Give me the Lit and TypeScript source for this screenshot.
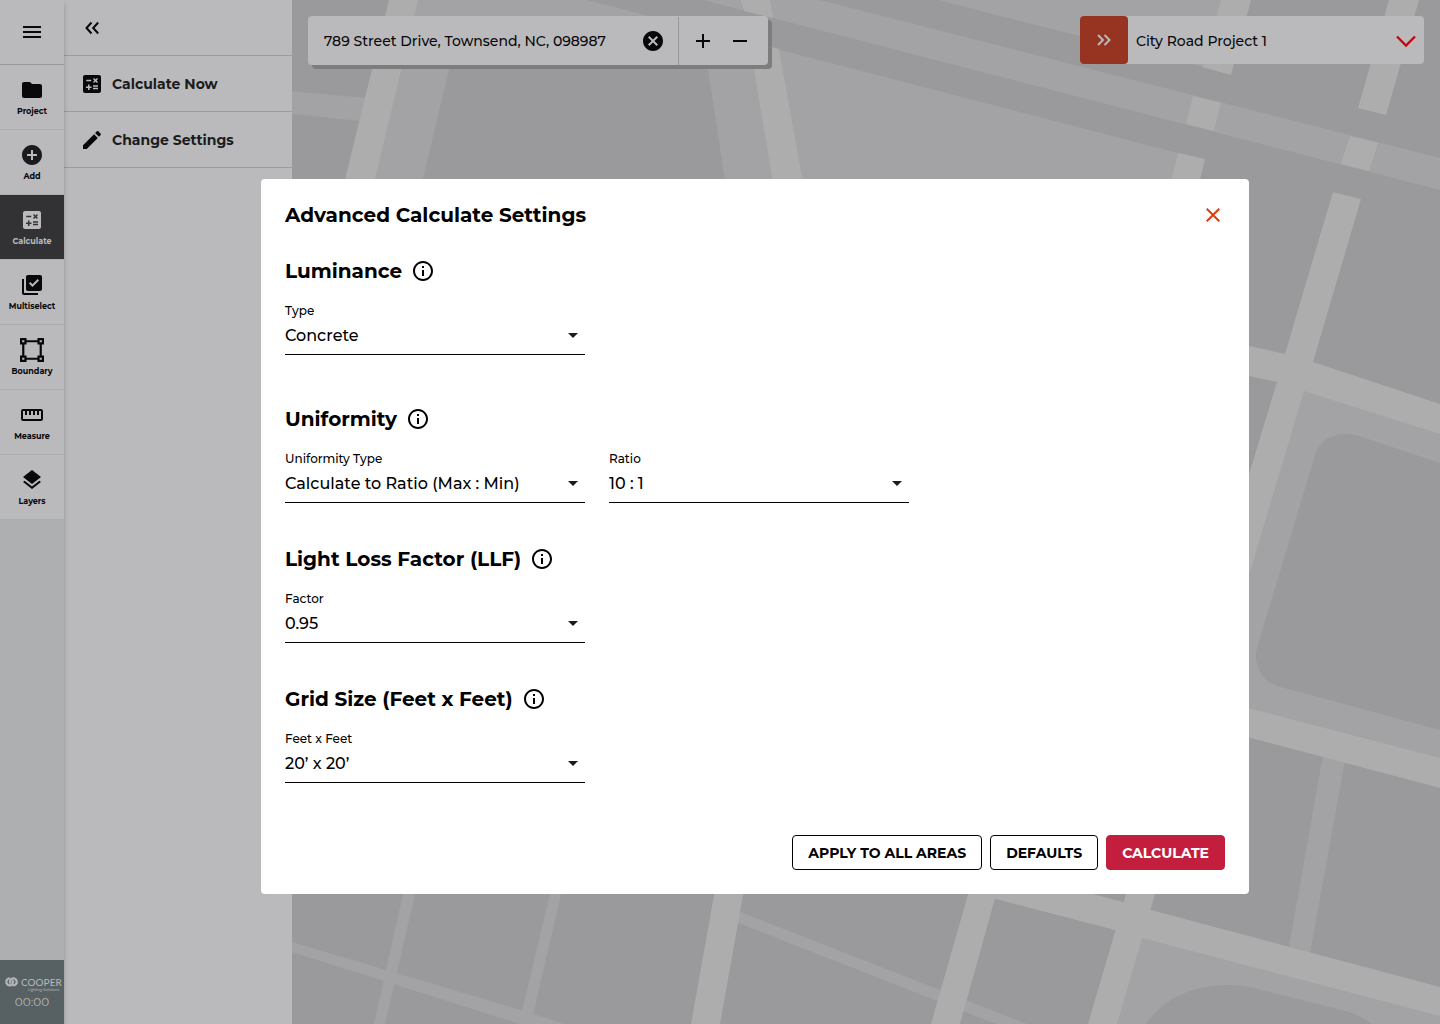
import { LitElement, html, svg, css, TemplateResult } from "lit";
import { customElement, property, state } from "lit/decorators.js";
import { classMap } from "lit/directives/class-map.js";

const CALC_PATH =
  "M19 3H5c-1.1 0-2 .9-2 2v14c0 1.1.9 2 2 2h14c1.1 0 2-.9 2-2V5c0-1.1-.9-2-2-2zm-5.97 4.06L14.09 6l1.41 1.41L16.91 6l1.06 1.06-1.41 1.41 1.41 1.41-1.06 1.06-1.41-1.4-1.41 1.41-1.06-1.06 1.41-1.41-1.41-1.42zM6.25 7.72h5v1.5h-5v-1.5zM11.5 16h-2v2H8v-2H6v-1.5h2v-2h1.5v2h2V16zm6.5 1.25h-5v-1.5h5v1.5zm0-2.5h-5v-1.5h5v1.5z";

const ICONS: Record<string, TemplateResult> = {
  menu: svg`<path d="M3 18h18v-2H3v2zm0-5h18v-2H3v2zm0-7v2h18V6H3z"/>`,
  folder: svg`<path d="M10 4H4c-1.1 0-1.99.9-1.99 2L2 18c0 1.1.9 2 2 2h16c1.1 0 2-.9 2-2V8c0-1.1-.9-2-2-2h-8l-2-2z"/>`,
  add: svg`<path fill="#1b1b1e" d="M12 2C6.48 2 2 6.48 2 12s4.480 10 10 10 10-4.480 10-10S17.520 2 12 2zm5 11h-4v4h-2v-4H7v-2h4V7h2v4h4v2z"/>`,
  calculate: svg`<path d=${CALC_PATH} />`,
  multiselect: svg`<path d="M20 2H8c-1.1 0-2 .9-2 2v12c0 1.1.9 2 2 2h12c1.1 0 2-.9 2-2V4c0-1.1-.9-2-2-2zm-7.530 12L9 10.500l1.400-1.410 2.070 2.080L17.600 6 19 7.410 12.470 14zM4 6H2v14c0 1.100.9 2 2 2h14v-2H4V6z"/>`,
  boundary: svg`<path transform="scale(1.091) translate(-1 -1)" d="M23 7V1h-6v2H7V1H1v6h2v10H1v6h6v-2h10v2h6v-6h-2V7h2zM3 3h2v2H3V3zm2 18H3v-2h2v2zm12-2H7v-2H5V7h2V5h10v2h2v10h-2v2zm4 2h-2v-2h2v2zM19 5V3h2v2h-2z"/>`,
  measure: svg`<path d="M21 6H3c-1.100 0-2 .9-2 2v8c0 1.100.9 2 2 2h18c1.100 0 2-.9 2-2V8c0-1.100-.9-2-2-2zm0 10H3V8h2v4h2V8h2v4h2V8h2v4h2V8h2v4h2V8h2v8z"/>`,
  layers: svg`<path d="M11.990 18.540l-7.370-5.730L3 14.070l9 7 9-7-1.630-1.270-7.380 5.740zM12 16l7.360-5.730L21 9l-9-7-9 7 1.630 1.270L12 16z"/>`,
  collapse: svg`<path d="M11.500 6.500L6.500 12l5 5.500M18.200 6.500L13.200 12l5 5.500" fill="none" stroke="currentColor" stroke-width="2"/>`,
  expand: svg`<path d="M6 7l5 5-5 5M12.500 7l5 5-5 5" fill="none" stroke="currentColor" stroke-width="2"/>`,
  edit: svg`<path d="M3 17.250V21h3.750L17.810 9.940l-3.750-3.750L3 17.250zM20.710 7.040c.39-.39.39-1.020 0-1.410l-2.340-2.340c-.39-.39-1.020-.39-1.410 0l-1.830 1.830 3.750 3.750 1.830-1.830z"/>`,
  clear: svg`<path d="M12 2C6.470 2 2 6.470 2 12s4.470 10 10 10 10-4.470 10-10S17.530 2 12 2zm5 13.590L15.590 17 12 13.410 8.410 17 7 15.590 10.590 12 7 8.410 8.410 7 12 10.590 15.590 7 17 8.410 13.410 12 17 15.590z"/>`,
  plus: svg`<path d="M19 13h-6v6h-2v-6H5v-2h6V5h2v6h6v2z"/>`,
  minus: svg`<path d="M19 13H5v-2h14v2z"/>`,
  close: svg`<path d="M19 6.410L17.590 5 12 10.590 6.410 5 5 6.410 10.590 12 5 17.590 6.410 19 12 13.410 17.590 19 19 17.590 13.410 12z"/>`,
  info: svg`<path d="M11 7h2v2h-2V7zm0 4h2v6h-2v-6zm1-9C6.480 2 2 6.480 2 12s4.480 10 10 10 10-4.480 10-10S17.520 2 12 2zm0 18c-4.410 0-8-3.590-8-8s3.590-8 8-8 8 3.590 8 8-3.590 8-8 8z"/>`,
  caret: svg`<path d="M7 10l5 5 5-5z"/>`,
  chevron: svg`<path d="M3 7.500l9 9 9-9" fill="none" stroke="currentColor" stroke-width="2.300"/>`,
};

const icon = (name: string) =>
  html`<svg class="icon" viewBox="0 0 24 24" aria-hidden="true">${ICONS[name]}</svg>`;

const iconStyles = css`
  .icon {
    display: block;
    flex: none;
    width: 24px;
    height: 24px;
    fill: currentColor;
  }
  button,
  input,
  select {
    margin: 0;
    padding: 0;
    border: 0;
    border-radius: 0;
    background: none;
    color: inherit;
    font: inherit;
    outline-offset: 2px;
  }
  select {
    appearance: none;
    cursor: pointer;
  }
  button {
    cursor: pointer;
  }
`;

/* Street map drawn behind the workspace. */
@customElement("street-map")
class StreetMap extends LitElement {
  static styles = css`
    :host {
      display: block;
      background: #9a9a9c;
    }
    svg {
      display: block;
      width: 100%;
      height: 100%;
    }
    .base {
      fill: #9a9a9c;
    }
    .block {
      fill: #a3a3a5;
    }
    .road {
      fill: #adadad;
    }
  `;

  render() {
    return html`<svg viewBox="292 0 1148 1024" preserveAspectRatio="xMinYMin slice" aria-hidden="true">
      <g class="block">
        <path d="M292 91L366 98L360 121L292 114Z" />
        <path d="M418 0H587L1178 153L1205 159L1195 200H340Z" />
        <path d="M703 0H820L1440 158V190Z" />
        <path d="M938 0H1225L1204 67L1040 26Z" />
        <path d="M1300 388L1440 432V760L1245 709V575Z" />
        <path d="M1323 755L1345 760L1310 953L1289 947Z" />
        <path d="M292 942L534 1014L564 1024H520L292 952Z" />
        <path d="M404 890H416L385 1024H374Z" />
        <path d="M551 890H562L533 1015L522 1011Z" />
        <path d="M738 911L1027 1024H996L736 922Z" />
        <path d="M1140 935L1440 1014V1024H1115Z" />
      </g>
      <g class="base">
        <path d="M464 50H705L728 200H418L450 65Z" />
        <path d="M1440 463L1356 435C1337 431 1320 438 1315 455L1257 648C1253 664 1261 681 1277 686L1440 730Z" />
        <path d="M1146 1024C1166 995 1198 985 1229 985Q1242 985 1254 988L1346 1011Q1360 1015 1372 1024Z" />
      </g>
      <g class="road">
        <path d="M389 0H418L370 200H340Z" />
        <path d="M741 0H770L773 18L744 11Z" />
        <path d="M749 41L779 49L806 200H776Z" />
        <path d="M1221 0H1251L1231 75L1202 67Z" />
        <path d="M1389 0H1419L1386 115L1358 108Z" />
        <path d="M1193 96L1221 103L1214 131L1186 124Z" />
        <path d="M1350 136L1378 143L1369 171L1341 164Z" />
        <path d="M1178 153L1205 159L1195 200H1166Z" />
        <path d="M1333 192L1361 199L1313 362L1304 391L1240 605V504L1277 382L1285 354Z" />
        <path d="M1240 344L1285 354L1313 362L1440 404V434L1304 391L1277 382L1240 374Z" />
        <path d="M1240 706L1440 758V788L1240 735Z" />
        <path d="M970 884H1055L1123 902L1151 910L1440 987V1016L1142 938L1115 930L996 899L940 884Z" />
        <path d="M971 884H999L960 1024H931Z" />
        <path d="M1129 884H1158L1117 1024H1088Z" />
        <path d="M716 884H745L720 1024H691Z" />
      </g>
    </svg>`;
  }
}

/* Labelled drop-down with an underline. */
@customElement("select-field")
class SelectField extends LitElement {
  @property() label = "";
  @property({ type: Array }) options: string[] = [];

  static styles = [
    iconStyles,
    css`
      :host {
        display: block;
        width: 300px;
      }
      label {
        display: block;
        font-size: 12px;
        line-height: 16px;
        font-weight: 500;
      }
      .control {
        display: grid;
        align-items: center;
        border-bottom: 1px solid #000000;
      }
      .control > * {
        grid-area: 1 / 1;
      }
      select {
        width: 100%;
        height: 35px;
        padding-bottom: 2px;
        font-size: 16px;
        font-weight: 500;
      }
      .caret {
        justify-self: end;
        padding-bottom: 4px;
        color: #1b1b1f;
        pointer-events: none;
      }
    `,
  ];

  render() {
    return html`
      <label for="field">${this.label}</label>
      <div class="control">
        <select id="field">
          ${this.options.map((o) => html`<option>${o}</option>`)}
        </select>
        <span class="caret">${icon("caret")}</span>
      </div>
    `;
  }
}

@customElement("nav-rail")
class NavRail extends LitElement {
  @state() private active = "Calculate";

  private items: [string, string][] = [
    ["Project", "folder"],
    ["Add", "add"],
    ["Calculate", "calculate"],
    ["Multiselect", "multiselect"],
    ["Boundary", "boundary"],
    ["Measure", "measure"],
    ["Layers", "layers"],
  ];

  static styles = [
    iconStyles,
    css`
      :host {
        display: flex;
        flex-direction: column;
        background: #adafb0;
        box-shadow: 0 4px 4px rgba(0, 0, 0, 0.25);
      }
      .menu {
        display: grid;
        place-items: center;
        height: 65px;
        border-bottom: 1px solid #98989a;
        background: #bababc;
      }
      nav {
        display: flex;
        flex-direction: column;
      }
      .item {
        display: flex;
        flex-direction: column;
        align-items: center;
        gap: 4px;
        height: 65px;
        padding-top: 13px;
        border-bottom: 1px solid #aeaeb0;
        background: #bababc;
        font-size: 8px;
        line-height: 10px;
        font-weight: 700;
      }
      .item.active {
        background: #323234;
        color: #bababc;
      }
      .brand {
        display: flex;
        flex-direction: column;
        align-items: center;
        gap: 2px;
        height: 64px;
        margin-top: auto;
        padding-top: 16px;
        box-sizing: border-box;
        background: #576063;
        color: #b2b4b5;
        font-size: 12px;
        line-height: 16px;
      }
      .logo {
        display: block;
        width: 56px;
        height: 16px;
        overflow: visible;
      }
      .name,
      .tag {
        font-family: Lato, sans-serif;
      }
      .name {
        font-size: 10px;
        font-weight: 500;
      }
      .tag {
        font-size: 4px;
      }
    `,
  ];

  render() {
    return html`
      <button class="menu" aria-label="Menu">${icon("menu")}</button>
      <nav>
        ${this.items.map(
          ([label, name]) => html`<button
            class=${classMap({ item: true, active: label === this.active })}
            @click=${() => (this.active = label)}
          >
            ${icon(name)}<span>${label}</span>
          </button>`
        )}
      </nav>
      <div class="brand">
        <svg class="logo" viewBox="0 0 56 16">
          <g fill="none" stroke="#b2b4b5" stroke-width="2.300">
            <path d="M5.800 2.400A3.500 3.500 0 1 0 8.400 8.200L9.200 4.200" />
            <path d="M8.800 9.300A3.500 3.500 0 1 0 6.600 3.600L5.800 7.400" />
          </g>
          <g fill="#b2b4b5">
            <text class="name" x="17" y="10">COOPER</text>
            <text class="tag" x="24" y="15">Lighting Solutions</text>
          </g>
        </svg>
        <span>00:00</span>
      </div>
    `;
  }
}

@customElement("settings-dialog")
class SettingsDialog extends LitElement {
  private sections = [
    { title: "Luminance", fields: [{ label: "Type", options: ["Concrete", "Asphalt"] }] },
    {
      title: "Uniformity",
      fields: [
        { label: "Uniformity Type", options: ["Calculate to Ratio (Max : Min)", "Calculate to Ratio (Avg : Min)"] },
        { label: "Ratio", options: ["10 : 1", "6 : 1", "4 : 1"] },
      ],
    },
    { title: "Light Loss Factor (LLF)", fields: [{ label: "Factor", options: ["0.95", "0.90", "0.85"] }] },
    { title: "Grid Size (Feet x Feet)", fields: [{ label: "Feet x Feet", options: ["20’ x 20’", "10’ x 10’"] }] },
  ];

  static styles = [
    iconStyles,
    css`
      :host {
        display: block;
        box-sizing: border-box;
        width: 100%;
        max-width: 988px;
        padding: 24px;
        border-radius: 4px;
        background: #ffffff;
        color: #000000;
      }
      header,
      .heading {
        display: flex;
        align-items: center;
        height: 24px;
      }
      header {
        justify-content: space-between;
        margin-bottom: 32px;
      }
      .close {
        color: #dd3b0a;
      }
      h2,
      h3 {
        margin: 0;
        font-size: 20px;
        line-height: 24px;
        font-weight: 700;
      }
      .sections {
        display: flex;
        flex-direction: column;
        gap: 44px;
      }
      .section:first-child {
        padding-bottom: 8px;
      }
      .heading {
        gap: 9px;
        margin-bottom: 20px;
      }
      .fields {
        display: flex;
        flex-wrap: wrap;
        gap: 24px;
      }
      footer {
        display: flex;
        justify-content: flex-end;
        gap: 8px;
        margin-top: 52px;
      }
      .action {
        height: 35px;
        padding: 0 15px;
        border: 1px solid #000000;
        border-radius: 4px;
        font-size: 14px;
        line-height: 16px;
        font-weight: 700;
      }
      .action.primary {
        border-color: #c41e3f;
        background: #c41e3f;
        color: #ffffff;
      }
    `,
  ];

  render() {
    return html`
      <header>
        <h2>Advanced Calculate Settings</h2>
        <button class="close" aria-label="Close">${icon("close")}</button>
      </header>
      <div class="sections">
        ${this.sections.map(
          (s) => html`<section class="section">
            <div class="heading">
              <h3>${s.title}</h3>
              <button aria-label="About ${s.title}">${icon("info")}</button>
            </div>
            <div class="fields">
              ${s.fields.map((f) => html`<select-field .label=${f.label} .options=${f.options}></select-field>`)}
            </div>
          </section>`
        )}
      </div>
      <footer>
        <button class="action">APPLY TO ALL AREAS</button>
        <button class="action">DEFAULTS</button>
        <button class="action primary">CALCULATE</button>
      </footer>
    `;
  }
}

@customElement("app-root")
class AppRoot extends LitElement {
  static styles = [
    iconStyles,
    css`
      :host {
        display: grid;
        grid-template-columns: 64px 228px 1fr;
        min-height: 100vh;
        color: #08080a;
        font-family: Montserrat, Inter, sans-serif;
      }
      nav-rail {
        z-index: 1;
      }
      .panel {
        background: #bababc;
      }
      .collapse,
      .row {
        display: flex;
        align-items: center;
        gap: 8px;
        width: 100%;
        height: 56px;
        padding: 0 16px;
        border-bottom: 1px solid #9c9c9e;
      }
      .row {
        font-size: 14px;
        line-height: 20px;
        font-weight: 700;
      }
      .row span {
        color: #1b1b1e;
      }
      .workspace {
        display: grid;
      }
      .workspace > * {
        grid-area: 1 / 1;
      }
      .bar {
        z-index: 1;
        display: flex;
        justify-content: space-between;
        align-items: flex-start;
        gap: 16px;
        padding: 16px;
        font-size: 14px;
        font-weight: 500;
      }
      .search,
      .project {
        display: flex;
        align-items: center;
        border-radius: 4px;
        background: #bababc;
      }
      .search {
        width: 460px;
        height: 49px;
        box-shadow: 4px 4px 0 #7d7d7f;
      }
      .address {
        flex: 1;
        min-width: 0;
        height: 49px;
        padding-left: 16px;
      }
      .clear {
        padding-right: 13px;
      }
      .zoom {
        display: flex;
        align-items: center;
        gap: 13px;
        height: 48px;
        padding: 0 16px 0 12px;
        border-left: 1px solid #98989a;
      }
      .project {
        width: 344px;
        height: 48px;
      }
      .open {
        display: grid;
        place-items: center;
        width: 48px;
        height: 48px;
        border-radius: 4px;
        background: #963421;
        color: #bababc;
      }
      .picker {
        display: grid;
        flex: 1;
        align-items: center;
      }
      .picker > * {
        grid-area: 1 / 1;
      }
      .picker select {
        height: 48px;
        padding: 2px 0 0 8px;
      }
      .chevron {
        justify-self: end;
        padding: 2px 6px 0 0;
        color: #c3050f;
        pointer-events: none;
      }
      .backdrop {
        position: fixed;
        inset: 0;
        z-index: 2;
        display: grid;
        place-items: center;
        padding: 49px 0 0 70px;
      }
    `,
  ];

  render() {
    return html`
      <nav-rail></nav-rail>
      <aside class="panel">
        <button class="collapse" aria-label="Collapse panel">${icon("collapse")}</button>
        <button class="row">${icon("calculate")}<span>Calculate Now</span></button>
        <button class="row">${icon("edit")}<span>Change Settings</span></button>
      </aside>
      <main class="workspace">
        <street-map></street-map>
        <div class="bar">
          <div class="search">
            <input class="address" aria-label="Address" value="789 Street Drive, Townsend, NC, 098987" />
            <button class="clear" aria-label="Clear address">${icon("clear")}</button>
            <div class="zoom">
              <button aria-label="Zoom in">${icon("plus")}</button>
              <button aria-label="Zoom out">${icon("minus")}</button>
            </div>
          </div>
          <div class="project">
            <button class="open" aria-label="Open project">${icon("expand")}</button>
            <div class="picker">
              <select aria-label="Project">
                <option>City Road Project 1</option>
              </select>
              <span class="chevron">${icon("chevron")}</span>
            </div>
          </div>
        </div>
      </main>
      <div class="backdrop">
        <settings-dialog role="dialog" aria-modal="true" aria-label="Advanced Calculate Settings"></settings-dialog>
      </div>
    `;
  }
}
